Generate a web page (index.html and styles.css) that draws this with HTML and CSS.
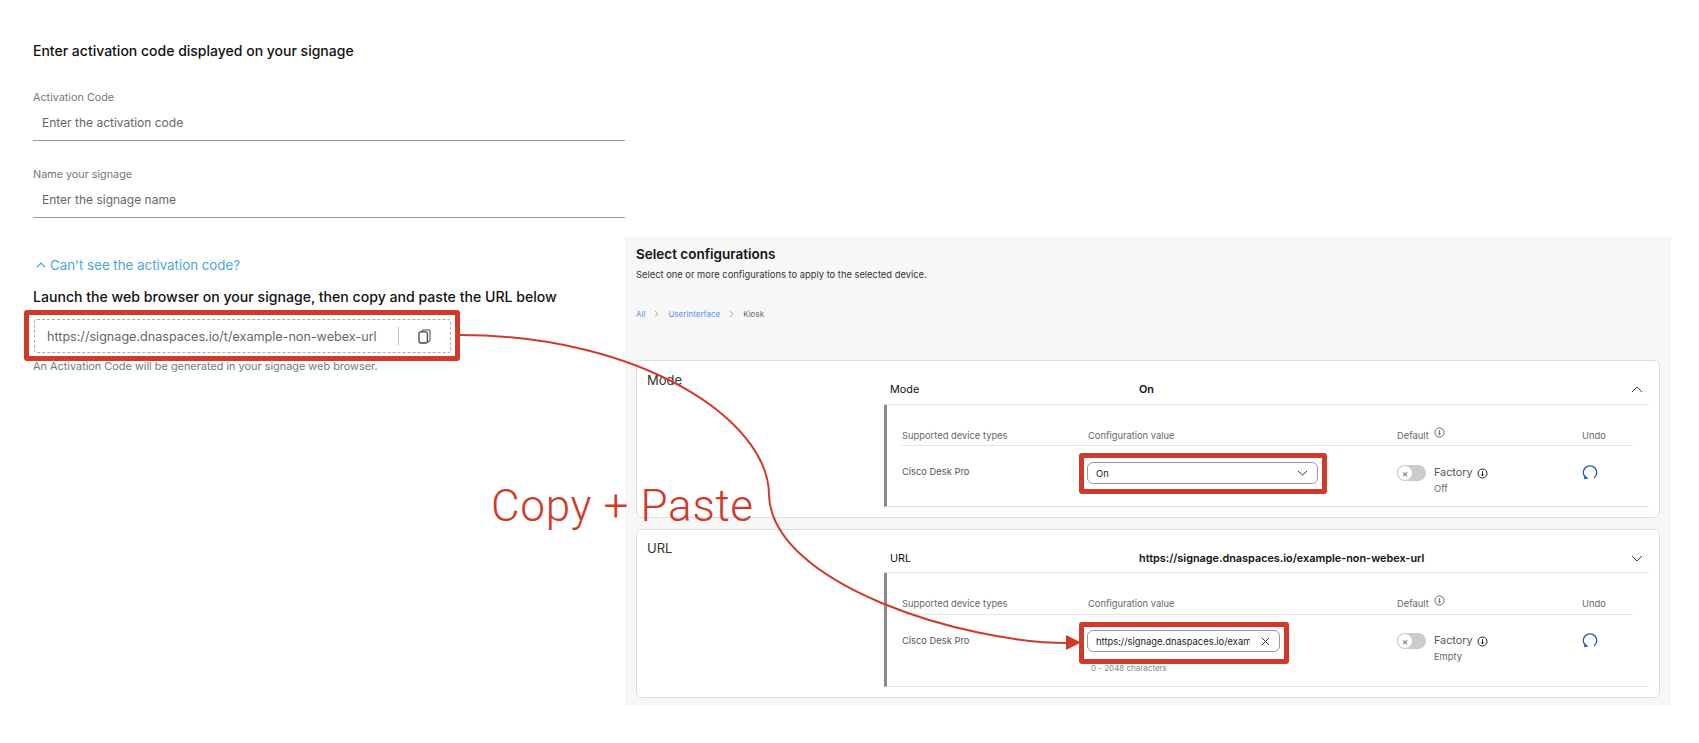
FILE: index.html
```html
<!DOCTYPE html>
<html lang="en">
<head>
<meta charset="utf-8">
<title>Signage activation</title>
<link rel="stylesheet" href="styles.css">
</head>
<body>
<div class="page">
  <section class="activation">
    <h1 class="act-title">Enter activation code displayed on your signage</h1>
    <div class="field field-first">
      <div class="field-label">Activation Code</div>
      <div class="field-input">Enter the activation code</div>
    </div>
    <div class="field">
      <div class="field-label">Name your signage</div>
      <div class="field-input">Enter the signage name</div>
    </div>
    <div class="link-row">
      <svg class="link-chevron" width="10" height="6" viewBox="0 0 10 6"><path d="M1 5 L5 1 L9 5" fill="none" stroke="#4ba6dc" stroke-width="1.2"/></svg>
      <span>Can't see the activation code?</span>
    </div>
    <div class="launch">Launch the web browser on your signage, then copy and paste the URL below</div>
    <div class="hl hl-url">
      <div class="url-box">
        <span class="url-text">https://signage.dnaspaces.io/t/example-non-webex-url</span>
        <span class="url-divider"></span>
        <svg class="copy-icon" width="13" height="15" viewBox="0 0 13 15"><path d="M3.5 2.6 L4.8 1 H11 Q12 1 12 2 V11 Q12 12 11 12.2 L9.6 13.2" fill="none" stroke="#555" stroke-width="1.1"/><rect x="1" y="2.8" width="8.4" height="11.2" rx="1.6" fill="#fff" stroke="#444" stroke-width="1.3"/></svg>
      </div>
    </div>
    <div class="help">An Activation Code will be generated in your signage web browser.</div>
  </section>

  <section class="config">
    <h2 class="cfg-title">Select configurations</h2>
    <p class="cfg-sub">Select one or more configurations to apply to the selected device.</p>
    <nav class="crumbs">
      <span class="crumb-link crumb-all">All</span>
      <svg width="5" height="8" viewBox="0 0 5 8"><path d="M1 1 L4 4 L1 7" fill="none" stroke="#999" stroke-width=".8"/></svg>
      <span class="crumb-link">UserInterface</span>
      <svg width="5" height="8" viewBox="0 0 5 8"><path d="M1 1 L4 4 L1 7" fill="none" stroke="#999" stroke-width=".8"/></svg>
      <span class="crumb-current">Kiosk</span>
    </nav>

    <article class="card card-mode">
      <div class="card-name">Mode</div>
      <div class="card-main">
        <div class="summary">
          <span>Mode</span>
          <strong>On</strong>
          <svg width="12" height="7" viewBox="0 0 12 7"><path d="M1 6 L6 1 L11 6" fill="none" stroke="#444" stroke-width="1"/></svg>
        </div>
        <div class="detail">
          <div class="grid head">
            <span>Supported device types</span>
            <span>Configuration value</span>
            <span class="head-default">Default
              <svg class="info-light" width="11" height="11" viewBox="0 0 11 11"><circle cx="5.5" cy="5.5" r="4.6" fill="none" stroke="#555" stroke-width=".9"/><path d="M5.5 3 V7.6 M4 6.4 L5.5 7.8 L7 6.4" fill="none" stroke="#555" stroke-width=".8"/></svg>
            </span>
            <span>Undo</span>
          </div>
          <div class="grid row">
            <span class="device">Cisco Desk Pro</span>
            <div class="value">
              <div class="hl hl-control">
                <div class="control control-select">
                  <span>On</span>
                  <svg width="11" height="6" viewBox="0 0 11 6"><path d="M1 1 L5.5 5 L10 1" fill="none" stroke="#333" stroke-width="1"/></svg>
                </div>
              </div>
            </div>
            <div class="default">
              <span class="toggle"><span class="knob">×</span></span>
              <div class="default-text">
                <div class="factory">Factory
                  <svg width="11" height="11" viewBox="0 0 11 11"><circle cx="5.5" cy="5.5" r="4.5" fill="none" stroke="#222" stroke-width="1"/><path d="M5.5 3 V7.8 M4 6.4 L5.5 7.9 L7 6.4" fill="none" stroke="#222" stroke-width="1"/></svg>
                </div>
                <div class="factory-val">Off</div>
              </div>
            </div>
            <svg class="undo" width="16" height="16" viewBox="0 0 16 16"><path d="M4.1 13 A6.7 6.7 0 1 1 11.9 13" fill="none" stroke="#2460b5" stroke-width="1.4"/><path d="M1.9 9.8 L2.2 14.2 L6.6 13.6 Z" fill="#2460b5"/></svg>
          </div>
        </div>
      </div>
    </article>

    <article class="card card-url">
      <div class="card-name">URL</div>
      <div class="card-main">
        <div class="summary">
          <span>URL</span>
          <strong>https://signage.dnaspaces.io/example-non-webex-url</strong>
          <svg width="12" height="7" viewBox="0 0 12 7"><path d="M1 1 L6 6 L11 1" fill="none" stroke="#444" stroke-width="1"/></svg>
        </div>
        <div class="detail">
          <div class="grid head">
            <span>Supported device types</span>
            <span>Configuration value</span>
            <span class="head-default">Default
              <svg class="info-light" width="11" height="11" viewBox="0 0 11 11"><circle cx="5.5" cy="5.5" r="4.6" fill="none" stroke="#555" stroke-width=".9"/><path d="M5.5 3 V7.6 M4 6.4 L5.5 7.8 L7 6.4" fill="none" stroke="#555" stroke-width=".8"/></svg>
            </span>
            <span>Undo</span>
          </div>
          <div class="grid row">
            <span class="device">Cisco Desk Pro</span>
            <div class="value">
              <div class="hl hl-control">
                <div class="control control-input">
                  <span class="control-text">https://signage.dnaspaces.io/example-non-webex-url</span>
                  <svg width="9" height="9" viewBox="0 0 9 9"><path d="M1 1 L8 8 M8 1 L1 8" fill="none" stroke="#333" stroke-width="1"/></svg>
                </div>
              </div>
              <div class="char-hint">0 - 2048 characters</div>
            </div>
            <div class="default">
              <span class="toggle"><span class="knob">×</span></span>
              <div class="default-text">
                <div class="factory">Factory
                  <svg width="11" height="11" viewBox="0 0 11 11"><circle cx="5.5" cy="5.5" r="4.5" fill="none" stroke="#222" stroke-width="1"/><path d="M5.5 3 V7.8 M4 6.4 L5.5 7.9 L7 6.4" fill="none" stroke="#222" stroke-width="1"/></svg>
                </div>
                <div class="factory-val">Empty</div>
              </div>
            </div>
            <svg class="undo" width="16" height="16" viewBox="0 0 16 16"><path d="M4.1 13 A6.7 6.7 0 1 1 11.9 13" fill="none" stroke="#2460b5" stroke-width="1.4"/><path d="M1.9 9.8 L2.2 14.2 L6.6 13.6 Z" fill="#2460b5"/></svg>
          </div>
        </div>
      </div>
    </article>
  </section>

  <svg class="arrow" width="1699" height="743" viewBox="0 0 1699 743">
    <path d="M460 335 C 640 335, 769 420, 769 495 C 772 585, 965 643, 1068 643" fill="none" stroke="#d13a2b" stroke-width="2"/>
    <path d="M1066 635 L1081 642.5 L1066 650 Z" fill="#d13a2b"/>
  </svg>
  <div class="annotation">Copy + Paste</div>
</div>
</body>
</html>
```

FILE: styles.css
```css
* { box-sizing: border-box; }
html, body { margin: 0; padding: 0; background: #fff; }
body { font-family: Inter, "Liberation Sans", sans-serif; color: #222; }

.page {
  position: relative;
  display: flex;
  align-items: flex-start;
  width: 1699px;
  height: 743px;
  overflow: hidden;
}

/* Left: activation form */
.activation { width: 625px; padding: 41px 0 0 33px; flex: none; }
.act-title { margin: 0; font-size: 14px; line-height: 20px; font-weight: 500; color: #111; }
.field { margin-top: 26px; height: 51px; border-bottom: 1px solid #999; }
.field-first { margin-top: 29px; }
.field-label { font-size: 10.8px; line-height: 16px; color: #777; }
.field-input { margin-top: 7px; padding-left: 9px; font-size: 12px; line-height: 20px; color: #666; }

.link-row { display: flex; align-items: center; gap: 4px; margin-top: 37px; padding-left: 3px; font-size: 13.3px; line-height: 20px; color: #4ba6dc; }
.launch { margin-top: 12px; font-size: 14.1px; line-height: 20px; font-weight: 500; color: #111; }

.hl { border: 5px solid #d13a2b; border-radius: 3px; background: #fff; }
.hl-url { width: 436px; margin: 3px 0 0 -9px; padding: 4px 4px 3px 5px; }
.url-box {
  display: flex;
  align-items: center;
  height: 34px;
  padding-left: 12px;
  border: 1px dashed #aaa;
  border-radius: 3px;
  color: #666;
  font-size: 12.6px;
}
.url-text { width: 351px; white-space: nowrap; }
.url-divider { width: 1px; height: 18px; background: #bbb; }
.copy-icon { margin-left: 19px; }
.help { position: relative; margin-top: -2px; font-size: 10.9px; line-height: 14px; color: #777; }

/* Right: configuration panel */
.config { width: 1046px; flex: none; margin-top: 237px; padding: 7px 11px 8px; background: #f7f7f7; }
.cfg-title { margin: 0; font-size: 13.5px; line-height: 20px; font-weight: 600; color: #111; }
.cfg-sub { margin: 4px 0 0; font-size: 9.35px; line-height: 14px; color: #333; }
.crumbs { display: flex; align-items: center; gap: 9px; margin-top: 26px; font-size: 8px; line-height: 12px; }
.crumb-link { color: #5b93ee; }
.crumb-current { color: #666; }

.card { display: flex; margin-top: 11px; background: #fff; border: 1px solid #ddd; border-radius: 6px; }
.card-mode { margin-top: 40px; height: 158px; }
.card-url { height: 169px; }
.card-name { width: 247px; flex: none; padding: 9px 0 0 10px; font-size: 13px; line-height: 18px; color: #333; }
.card-mode .card-name { padding-top: 10px; }
.card-main { width: 765px; flex: none; }

.summary {
  display: grid;
  grid-template-columns: 249px 1fr auto;
  align-items: center;
  height: 43px;
  padding: 14px 6px 0 6px;
  border-bottom: 1px solid #e6e6e6;
  font-size: 10.85px;
  color: #111;
}
.card-mode .summary { height: 44px; padding-top: 13px; }
.summary strong { font-weight: 600; }

.detail { border-left: 3px solid #8a8a8a; border-bottom: 1px solid #e0e0e0; padding: 0 16px 0 15px; }
.card-mode .detail { height: 102px; }
.card-url .detail { height: 114px; }

.grid { display: grid; grid-template-columns: 186px 309px 185px 1fr; }
.head { height: 41px; align-items: end; padding-bottom: 2px; border-bottom: 1px solid #e6e6e6; font-size: 9.35px; line-height: 14px; color: #666; }
.card-url .head { height: 42px; padding-bottom: 3px; }
.head-default { display: flex; align-items: flex-start; gap: 5px; }
.info-light { margin-top: -2px; }
.row { padding-top: 16px; }
.card-url .row { padding-top: 15px; }
.device { margin-top: 3px; font-size: 9.35px; line-height: 14px; color: #555; }
.card-url .device { margin-top: 4px; }

.value { margin: 0; }
.hl-control { width: fit-content; margin: -9px 0 0 -9px; padding: 4px 4px 5px 3px; }
.card-url .hl-control { margin-top: -8px; padding: 3px 4px 7px 3px; }
.control {
  display: flex;
  align-items: center;
  justify-content: space-between;
  height: 22px;
  padding: 0 9px 0 8px;
  border: 1px solid #999;
  border-radius: 6px;
  background: #fff;
  font-size: 9.4px;
  color: #222;
}
.control-select { width: 231px; }
.control-input { width: 193px; }
.control-text { width: 154px; overflow: hidden; white-space: nowrap; }
.char-hint { margin: -1px 0 0 3px; font-size: 8px; line-height: 10px; color: #888; }

.default { display: flex; gap: 8px; }
.toggle { display: block; width: 29px; height: 16px; margin-top: 3px; border-radius: 8px; background: #ccc; }
.knob {
  display: flex;
  align-items: center;
  justify-content: center;
  width: 16px;
  height: 16px;
  border: 1px solid #ccc;
  border-radius: 50%;
  background: #fff;
  font-size: 10px;
  line-height: 1;
  color: #666;
}
.default-text { margin-top: 4px; }
.factory { display: flex; align-items: center; gap: 4px; font-size: 10.8px; line-height: 14px; font-weight: 400; color: #555; }
.factory-val { margin-top: 1px; font-size: 9.35px; line-height: 15px; color: #666; }
.undo { margin: 3px 0 0 0; }

/* Annotation layer over the composed screenshots */
.arrow { position: absolute; left: 0; top: 0; pointer-events: none; }
.annotation {
  position: absolute;
  left: 491px;
  top: 480px;
  font-family: Roboto, "Liberation Sans", sans-serif;
  font-weight: 300;
  font-size: 44px;
  letter-spacing: .7px;
  line-height: 52px;
  color: #d13a2b;
  white-space: nowrap;
}
```
